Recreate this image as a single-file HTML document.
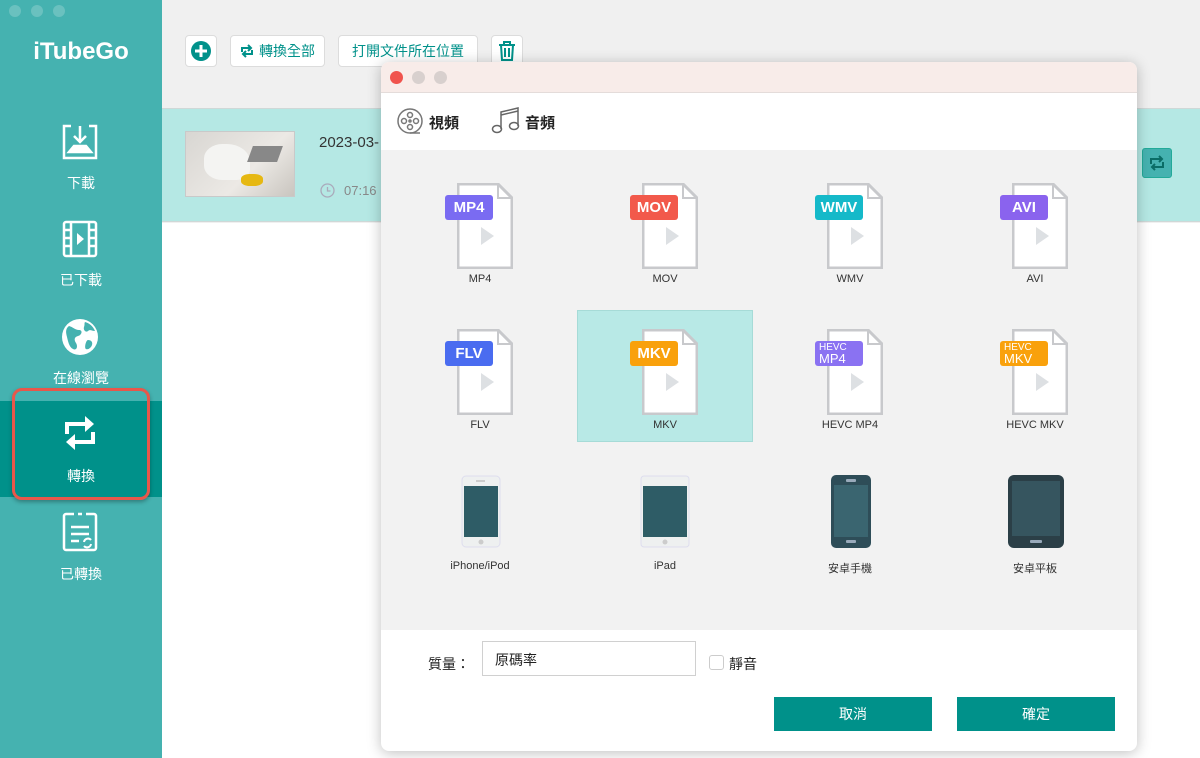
<!DOCTYPE html>
<html><head><meta charset="utf-8"><style>
*{margin:0;padding:0;box-sizing:border-box}
body{width:1200px;height:758px;overflow:hidden;background:#f0f0f0;font-family:"Liberation Sans","Noto Sans CJK TC",sans-serif;position:relative}
.abs{position:absolute}
#side{left:0;top:0;width:162px;height:758px;background:#45b2b0}
.dot{width:12px;height:12px;border-radius:50%;background:#6ac1bf;top:5px}
.logo{left:0;width:162px;top:38px;text-align:center;color:#fff;font-weight:bold;font-size:24px}
.si{left:0;width:162px;text-align:center;color:#fff;font-size:14px}
.tb{top:35px;height:32px;background:#fff;border:1px solid #dcdcdc;border-radius:4px;color:#00918a;font-size:14px;display:flex;align-items:center;justify-content:center;gap:5px}
.dlg{left:381px;top:62px;width:756px;height:689px;border-radius:8px;background:#fff;box-shadow:0 2px 14px rgba(0,0,0,.25);overflow:hidden}
.cell{position:absolute;width:176px;text-align:center;font-size:11px;color:#333}
.fi{position:relative;width:70px;height:88px;margin:0 auto}
.pg{position:absolute;left:12px;top:0;width:56px;height:86px}
.bd{position:absolute;left:0;top:12px;width:48px;height:25px;border-radius:3px;color:#fff;font-weight:bold;font-size:15px;line-height:25px;text-align:center}
.bd2{font-weight:normal;font-size:10px;line-height:10px;padding-top:2px;text-align:left;padding-left:4px}
.bd2 b{font-weight:normal;font-size:13px;display:block;line-height:12px}
.btn{top:635px;height:34px;width:158px;background:#00918a;color:#fff;font-size:14px;text-align:center;line-height:34px}
.dl{position:absolute;top:498px;width:176px;text-align:center;font-size:11px;color:#333}
</style></head><body>
<div id="side" class="abs">
<div class="abs dot" style="left:9px"></div><div class="abs dot" style="left:31px"></div><div class="abs dot" style="left:53px"></div>
<div class="abs logo">iTubeGo</div>
<svg class="abs" style="left:62px;top:124px" width="36" height="36" viewBox="0 0 36 36" fill="none" stroke="#fff" stroke-width="2.5"><path d="M9 2H2v32h32V2h-7"/><path d="M18 2v16M12 12l6 6 6-6"/><path d="M7 28h22l-5-6H12z" fill="#fff"/></svg>
<div class="abs si" style="top:173px">下載</div>
<svg class="abs" style="left:62px;top:220px" width="36" height="38" viewBox="0 0 36 38" fill="none" stroke="#fff" stroke-width="2.5"><rect x="2" y="2" width="32" height="34" rx="2"/><path d="M9 2v34M27 2v34M2 10h7M2 18h7M2 26h7M27 10h7M27 18h7M27 26h7"/><path d="M15 13l7 6-7 6z" fill="#fff" stroke="none"/></svg>
<div class="abs si" style="top:270px">已下載</div>
<svg class="abs" style="left:61px;top:318px" width="38" height="38" viewBox="0 0 38 38"><circle cx="19" cy="19" r="18" fill="#fff"/><path d="M8 8c4 1 6 4 10 4s3 5-1 6-4 4-2 7 1 8-3 6-5-8-6-12-2-8 2-11zM24 4c4 1 8 4 10 9-3 0-5-2-7 0s-5-1-4-4 0-3 1-5zM27 22c3 0 5 2 4 5s-4 5-6 4 0-9 2-9z" fill="#45b2b0"/></svg>
<div class="abs si" style="top:368px">在線瀏覽</div>
<div class="abs" style="left:0;top:401px;width:162px;height:96px;background:#00918a"></div>
<div class="abs" style="left:12px;top:388px;width:138px;height:112px;border:3px solid #e8574a;border-radius:10px;box-shadow:0 2px 4px rgba(0,0,0,.3)"></div>
<svg class="abs" style="left:63px;top:414px" width="34" height="38" viewBox="0 0 34 38" fill="none" stroke="#fff" stroke-width="4"><path d="M4 20V10h20"/><path d="M22 2l9 8-9 8z" fill="#fff" stroke="none"/><path d="M30 18v10H10"/><path d="M12 20l-9 8 9 8z" fill="#fff" stroke="none"/></svg>
<div class="abs si" style="top:466px">轉換</div>
<svg class="abs" style="left:62px;top:512px" width="36" height="40" viewBox="0 0 36 40" fill="none" stroke="#fff" stroke-width="2.5"><path d="M12 2H4a2 2 0 0 0-2 2v32a2 2 0 0 0 2 2h28a2 2 0 0 0 2-2V4a2 2 0 0 0-2-2h-8M16 2h4"/><path d="M9 15h18M9 22h18M9 29h8"/><path d="M22 30a4 4 0 0 1 7-2M29 32a4 4 0 0 1-7 2" stroke-width="2"/></svg>
<div class="abs si" style="top:564px">已轉換</div>
</div>
<div class="abs tb" style="left:185px;width:32px"><svg width="22" height="22"><circle cx="11" cy="11" r="10" fill="#00918a"/><path d="M11 5v12M5 11h12" stroke="#fff" stroke-width="3"/></svg></div>
<div class="abs tb" style="left:230px;width:95px"><svg width="14" height="14" viewBox="0 0 14 14" fill="none" stroke="#00918a" stroke-width="2"><path d="M2 8V4h8M8 1l3 3-3 3M12 6v4H4M6 13l-3-3 3-3"/></svg>轉換全部</div>
<div class="abs tb" style="left:338px;width:140px">打開文件所在位置</div>
<div class="abs tb" style="left:491px;width:32px"><svg width="18" height="20" viewBox="0 0 18 20" fill="none" stroke="#00918a" stroke-width="2"><path d="M1 4h16M6 4V1h6v3M3 4l1 15h10l1-15M7 7v9M11 7v9"/></svg></div>
<div class="abs" style="left:162px;top:108px;width:1038px;height:114px;background:#b5e8e4;border-top:1px solid #cfd8d7;border-bottom:1px solid #cfd8d7"></div>
<div class="abs" style="left:162px;top:223px;width:1038px;height:535px;background:#fff"></div>
<div class="abs" style="left:185px;top:131px;width:110px;height:66px;background:linear-gradient(135deg,#d8d6d2,#ece9e5 60%,#c9c5bf);border:1px solid #c9c9c9"><div class="abs" style="left:18px;top:12px;width:46px;height:36px;background:#f4f4f2;border-radius:40% 50% 30% 40%"></div><div class="abs" style="left:55px;top:42px;width:22px;height:12px;background:#e6b812;border-radius:40%"></div><div class="abs" style="left:64px;top:14px;width:30px;height:16px;background:#888;transform:skew(-20deg)"></div></div>
<div class="abs" style="left:319px;top:134px;font-size:15px;color:#333">2023-03-</div>
<svg class="abs" style="left:320px;top:183px" width="15" height="15"><circle cx="7.5" cy="7.5" r="6.5" fill="none" stroke="#aab" stroke-width="1.3"/><path d="M7.5 4v4h3" fill="none" stroke="#aab" stroke-width="1.3"/></svg>
<div class="abs" style="left:344px;top:183px;font-size:13px;color:#888">07:16</div>
<div class="abs" style="left:1142px;top:148px;width:30px;height:30px;background:#45b2b0;border:1px solid #2a9;border-radius:3px"><svg width="28" height="28" viewBox="0 0 28 28" fill="none" stroke="#0a6d66" stroke-width="2"><path d="M8 15V10h10M16 7l3 3-3 3M20 13v5H10M12 21l-3-3 3-3"/></svg></div>

<div class="abs dlg">
<div class="abs" style="left:0;top:0;width:756px;height:31px;background:#f8ece9;border-bottom:1px solid #e4dcda"></div>
<div class="abs" style="left:9px;top:9px;width:13px;height:13px;border-radius:50%;background:#f0534d"></div>
<div class="abs" style="left:31px;top:9px;width:13px;height:13px;border-radius:50%;background:#d8d0ce"></div>
<div class="abs" style="left:53px;top:9px;width:13px;height:13px;border-radius:50%;background:#d8d0ce"></div>
<div class="abs" style="left:0;top:88px;width:756px;height:480px;background:#f2f2f2"></div>
<svg class="abs" style="left:18px;top:78px" width="60" height="10"><path d="M0 10L30 0 60 10z" fill="#fff"/></svg>
<svg class="abs" style="left:16px;top:46px" width="28" height="28" viewBox="0 0 28 28" fill="none" stroke="#777" stroke-width="1.5"><circle cx="13" cy="13" r="12"/><circle cx="13" cy="7" r="2.5"/><circle cx="13" cy="19" r="2.5"/><circle cx="7" cy="13" r="2.5"/><circle cx="19" cy="13" r="2.5"/><circle cx="13" cy="13" r="1"/><path d="M13 25h10"/></svg>
<div class="abs" style="left:48px;top:50px;font-size:15px;font-weight:bold;color:#222">視頻</div>
<svg class="abs" style="left:110px;top:45px" width="30" height="28" viewBox="0 0 30 28" fill="none" stroke="#666" stroke-width="1.5"><path d="M10 22V5L27 1v18"/><path d="M10 8l17-4"/><ellipse cx="6" cy="22" rx="4.5" ry="3.5"/><ellipse cx="23" cy="19" rx="4.5" ry="3.5"/></svg>
<div class="abs" style="left:144px;top:50px;font-size:15px;font-weight:bold;color:#222">音頻</div>

<div class="abs" style="left:196px;top:248px;width:176px;height:132px;background:#b8e9e6;border:1px solid #a6dbd7"></div>

<div class="cell" style="left:11px;top:121px"><div class="fi"><svg class="pg" viewBox="0 0 56 86"><path d="M1 1h40l14 14v70H1z" fill="#fff" stroke="#c8c9cc" stroke-width="3"/><path d="M41 1v14h14" fill="none" stroke="#c8c9cc" stroke-width="2"/><path d="M24 44l13 9-13 9z" fill="#dde0e3"/></svg><div class="bd" style="background:#7a6bf2">MP4</div></div><div style="margin-top:2px">MP4</div></div>
<div class="cell" style="left:196px;top:121px"><div class="fi"><svg class="pg" viewBox="0 0 56 86"><path d="M1 1h40l14 14v70H1z" fill="#fff" stroke="#c8c9cc" stroke-width="3"/><path d="M41 1v14h14" fill="none" stroke="#c8c9cc" stroke-width="2"/><path d="M24 44l13 9-13 9z" fill="#dde0e3"/></svg><div class="bd" style="background:#f2594b">MOV</div></div><div style="margin-top:2px">MOV</div></div>
<div class="cell" style="left:381px;top:121px"><div class="fi"><svg class="pg" viewBox="0 0 56 86"><path d="M1 1h40l14 14v70H1z" fill="#fff" stroke="#c8c9cc" stroke-width="3"/><path d="M41 1v14h14" fill="none" stroke="#c8c9cc" stroke-width="2"/><path d="M24 44l13 9-13 9z" fill="#dde0e3"/></svg><div class="bd" style="background:#15b9c9">WMV</div></div><div style="margin-top:2px">WMV</div></div>
<div class="cell" style="left:566px;top:121px"><div class="fi"><svg class="pg" viewBox="0 0 56 86"><path d="M1 1h40l14 14v70H1z" fill="#fff" stroke="#c8c9cc" stroke-width="3"/><path d="M41 1v14h14" fill="none" stroke="#c8c9cc" stroke-width="2"/><path d="M24 44l13 9-13 9z" fill="#dde0e3"/></svg><div class="bd" style="background:#8a63ee">AVI</div></div><div style="margin-top:2px">AVI</div></div>
<div class="cell" style="left:11px;top:267px"><div class="fi"><svg class="pg" viewBox="0 0 56 86"><path d="M1 1h40l14 14v70H1z" fill="#fff" stroke="#c8c9cc" stroke-width="3"/><path d="M41 1v14h14" fill="none" stroke="#c8c9cc" stroke-width="2"/><path d="M24 44l13 9-13 9z" fill="#dde0e3"/></svg><div class="bd" style="background:#4a6cf0">FLV</div></div><div style="margin-top:2px">FLV</div></div>
<div class="cell" style="left:196px;top:267px"><div class="fi"><svg class="pg" viewBox="0 0 56 86"><path d="M1 1h40l14 14v70H1z" fill="#fff" stroke="#c8c9cc" stroke-width="3"/><path d="M41 1v14h14" fill="none" stroke="#c8c9cc" stroke-width="2"/><path d="M24 44l13 9-13 9z" fill="#dde0e3"/></svg><div class="bd" style="background:#f9a10c">MKV</div></div><div style="margin-top:2px">MKV</div></div>
<div class="cell" style="left:381px;top:267px"><div class="fi"><svg class="pg" viewBox="0 0 56 86"><path d="M1 1h40l14 14v70H1z" fill="#fff" stroke="#c8c9cc" stroke-width="3"/><path d="M41 1v14h14" fill="none" stroke="#c8c9cc" stroke-width="2"/><path d="M24 44l13 9-13 9z" fill="#dde0e3"/></svg><div class="bd bd2" style="background:#8a72f2">HEVC<b>MP4</b></div></div><div style="margin-top:2px">HEVC MP4</div></div>
<div class="cell" style="left:566px;top:267px"><div class="fi"><svg class="pg" viewBox="0 0 56 86"><path d="M1 1h40l14 14v70H1z" fill="#fff" stroke="#c8c9cc" stroke-width="3"/><path d="M41 1v14h14" fill="none" stroke="#c8c9cc" stroke-width="2"/><path d="M24 44l13 9-13 9z" fill="#dde0e3"/></svg><div class="bd bd2" style="background:#f9a10c">HEVC<b>MKV</b></div></div><div style="margin-top:2px">HEVC MKV</div></div>

<svg class="abs" style="left:80px;top:413px" width="40" height="73" viewBox="0 0 40 73"><rect x="1" y="1" width="38" height="71" rx="4" fill="#eef0f0" stroke="#dde"/><rect x="3" y="11" width="34" height="51" fill="#2e5c66"/><rect x="15" y="5" width="9" height="2" fill="#ccc"/><circle cx="20" cy="67" r="2.5" fill="#ccc"/></svg>
<div class="dl" style="left:11px">iPhone/iPod</div>
<svg class="abs" style="left:259px;top:413px" width="50" height="73" viewBox="0 0 50 73"><rect x="1" y="1" width="48" height="71" rx="3" fill="#eef0f0" stroke="#dde"/><rect x="3" y="11" width="44" height="51" fill="#2e5c66"/><circle cx="25" cy="67" r="2.5" fill="#ccc"/></svg>
<div class="dl" style="left:196px">iPad</div>
<svg class="abs" style="left:450px;top:413px" width="40" height="73" viewBox="0 0 40 73"><rect x="0" y="0" width="40" height="73" rx="5" fill="#2e4d58"/><rect x="3" y="10" width="34" height="52" fill="#3a6570"/><rect x="15" y="4" width="10" height="3" rx="1" fill="#9ab"/><rect x="15" y="65" width="10" height="3" rx="1" fill="#9ab"/></svg>
<div class="dl" style="left:381px">安卓手機</div>
<svg class="abs" style="left:627px;top:413px" width="56" height="73" viewBox="0 0 56 73"><rect x="0" y="0" width="56" height="73" rx="6" fill="#2b3f47"/><rect x="4" y="6" width="48" height="55" fill="#36555f"/><rect x="22" y="65" width="12" height="3" rx="1" fill="#9ab"/></svg>
<div class="dl" style="left:566px">安卓平板</div>

<div class="abs" style="left:47px;top:592px;font-size:14px;color:#222">質量：</div>
<div class="abs" style="left:101px;top:579px;width:214px;height:35px;border:1px solid #d0d0d0;background:#fff;font-size:14px;padding:8px 12px;color:#222">原碼率</div>
<div class="abs" style="left:328px;top:593px;width:15px;height:15px;border:1px solid #ccc;border-radius:3px;background:#fff"></div>
<div class="abs" style="left:348px;top:592px;font-size:14px;color:#222">靜音</div>
<div class="abs btn" style="left:393px">取消</div>
<div class="abs btn" style="left:576px">確定</div>
</div>
</body></html>
